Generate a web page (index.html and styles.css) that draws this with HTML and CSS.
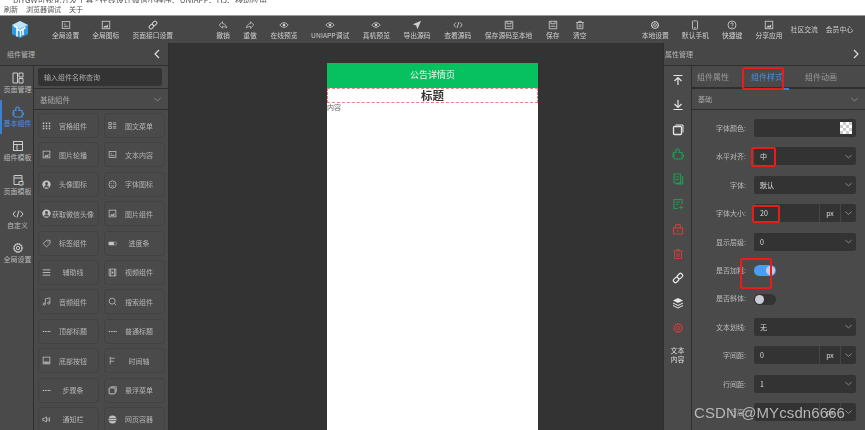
FILE: index.html
```html
<!DOCTYPE html>
<html lang="zh">
<head>
<meta charset="utf-8">
<title>组件样式</title>
<link rel="stylesheet" href="styles.css">
</head>
<body>
<svg class="defs" width="0" height="0">
<defs>
<symbol id="i-box" viewBox="0 0 12 12"><rect x="1.500" y="2" width="9" height="8" fill="none" stroke="currentColor"/><path d="M3.500 7.500h5M3.500 5h2" stroke="currentColor"/></symbol>
<symbol id="i-pic" viewBox="0 0 12 12"><rect x="1.500" y="1.500" width="9" height="9" fill="none" stroke="currentColor"/><path d="M3 8.500l2-2 1.500 1 2-2.500V9H3z" fill="currentColor"/></symbol>
<symbol id="i-link" viewBox="0 0 12 12"><g fill="none" stroke="currentColor" stroke-width="1.200" transform="rotate(-45 6 6)"><rect x="0.500" y="4" width="5.500" height="4" rx="1.500"/><rect x="6" y="4" width="5.500" height="4" rx="1.500"/></g></symbol>
<symbol id="i-undo" viewBox="0 0 12 12"><path d="M5.500 2L1.500 6l4 4V7.800c2 0 3.500.4 5 1.700C10 6.500 8 4.500 5.500 4.300z" fill="none" stroke="currentColor" stroke-width=".9"/></symbol>
<symbol id="i-redo" viewBox="0 0 12 12"><path d="M6.500 2l4 4-4 4V7.800c-2 0-3.500.4-5 1.700C2 6.500 4 4.500 6.500 4.300z" fill="none" stroke="currentColor" stroke-width=".9"/></symbol>
<symbol id="i-eye" viewBox="0 0 12 12"><path d="M1 6c2.800-3.600 7.200-3.600 10 0-2.800 3.600-7.200 3.600-10 0z" fill="none" stroke="currentColor"/><circle cx="6" cy="6" r="1.600" fill="currentColor"/></symbol>
<symbol id="i-send" viewBox="0 0 12 12"><path d="M11 1L1 5l4 1.500L6.500 11zM5 6.500L11 1" fill="currentColor"/></symbol>
<symbol id="i-code" viewBox="0 0 12 12"><path d="M3.500 3L1 6l2.500 3M8.500 3L11 6 8.500 9M7 2.500L5 9.500" fill="none" stroke="currentColor"/></symbol>
<symbol id="i-save" viewBox="0 0 12 12"><path d="M1.500 1.500h9v9h-9zM3.500 1.500v3h5v-3M3 7.500h6" fill="none" stroke="currentColor"/></symbol>
<symbol id="i-trash" viewBox="0 0 12 12"><path d="M1.500 3h9M4.500 3V1.500h3V3M2.500 3v7.500h7V3M5 5v4M7 5v4" fill="none" stroke="currentColor"/></symbol>
<symbol id="i-gear" viewBox="0 0 12 12"><circle cx="6" cy="6" r="4" fill="none" stroke="currentColor" stroke-width="1.500" stroke-dasharray="1.800 .3"/><circle cx="6" cy="6" r="1.700" fill="none" stroke="currentColor"/></symbol>
<symbol id="i-phone" viewBox="0 0 12 12"><rect x="3" y="1" width="6" height="10" rx="1" fill="none" stroke="currentColor"/><path d="M5 9.300h2" stroke="currentColor"/></symbol>
<symbol id="i-help" viewBox="0 0 12 12"><circle cx="6" cy="6" r="4.800" fill="none" stroke="currentColor"/><path d="M4.500 4.800C4.500 3 7.500 3 7.500 4.800 7.500 6 6 5.800 6 7.300M6 8.200v1" fill="none" stroke="currentColor"/></symbol>
<symbol id="i-layout" viewBox="0 0 12 12"><path d="M1 1h4.500v10H1zM7 1h4v4H7zM7 6.500h4V11H7z" fill="none" stroke="currentColor"/></symbol>
<symbol id="i-puzzle" viewBox="0 0 12 12"><path d="M1.500 4.500h2.500C3 2 4.500 1 5.500 1S8 2 7 4.500h3v2.300c2 -.5 2 2.700 0 2.200V11h-7L1 8.500c1.500.5 1.500-2.500 0-2z" fill="none" stroke="currentColor" stroke-width="1.200"/></symbol>
<symbol id="i-tmpl" viewBox="0 0 12 12"><rect x="1.500" y="1.500" width="9" height="9" fill="none" stroke="currentColor"/><path d="M1.500 4.500h9M5 4.500v6" stroke="currentColor"/></symbol>
<symbol id="i-page" viewBox="0 0 12 12"><path d="M2 1.500h8v6M2 1.500v9h5" fill="none" stroke="currentColor"/><path d="M2 4h8M7 7.500h4v3.500H7z" fill="none" stroke="currentColor"/></symbol>
<symbol id="i-grid" viewBox="0 0 12 12"><path d="M1 2h2v2H1zM5 2h2v2H5zM9 2h2v2H9zM1 5.500h2v2H1zM5 5.500h2v2H5zM9 5.500h2v2H9zM1 9h2v2H1zM5 9h2v2H5zM9 9h2v2H9z" fill="currentColor"/></symbol>
<symbol id="i-list" viewBox="0 0 12 12"><path d="M1 2h3.500v3H1zM1 7h3.500v3H1z" fill="none" stroke="currentColor"/><path d="M6.500 2.500h4.500M6.500 4.500h4.500M6.500 7.500h4.500M6.500 9.500h4.500" stroke="currentColor"/></symbol>
<symbol id="i-user" viewBox="0 0 12 12"><circle cx="6" cy="6" r="5.500" fill="currentColor"/><circle cx="6" cy="4.700" r="2" fill="#4a4a4a"/><path d="M2.500 10c.6-4 6.400-4 7 0z" fill="#4a4a4a"/></symbol>
<symbol id="i-smile" viewBox="0 0 12 12"><circle cx="6" cy="6" r="4.800" fill="none" stroke="currentColor"/><path d="M3.800 7c1 1.500 3.400 1.500 4.400 0M4.300 4.300v1M7.700 4.300v1" fill="none" stroke="currentColor"/></symbol>
<symbol id="i-tag" viewBox="0 0 12 12"><path d="M1.500 6L6.500 1.500 11 2l-.5 4.500L6 10.500z" fill="none" stroke="currentColor"/><circle cx="8" cy="4" r=".8" fill="currentColor"/></symbol>
<symbol id="i-bar" viewBox="0 0 12 12"><rect x="1" y="4" width="10" height="4" rx="1" fill="none" stroke="currentColor" stroke-width=".7"/><rect x="1" y="4" width="7" height="4" rx="1" fill="currentColor"/></symbol>
<symbol id="i-lines" viewBox="0 0 12 12"><path d="M1 2.500h10M1 6h10M1 9.500h10" stroke="currentColor" stroke-width="1.200"/></symbol>
<symbol id="i-video" viewBox="0 0 12 12"><path d="M1.500 1.500h9v9h-9z" fill="none" stroke="currentColor"/><path d="M3.500 1.500v9M8.500 1.500v9" stroke="currentColor"/><path d="M5 4l2.500 2L5 8z" fill="currentColor"/></symbol>
<symbol id="i-music" viewBox="0 0 12 12"><path d="M4.500 9V2.500l6-1.500v6.500" fill="none" stroke="currentColor"/><circle cx="3" cy="9.500" r="1.500" fill="none" stroke="currentColor"/><circle cx="9" cy="8" r="1.500" fill="none" stroke="currentColor"/></symbol>
<symbol id="i-search" viewBox="0 0 12 12"><circle cx="5.500" cy="5.500" r="4" fill="none" stroke="currentColor"/><path d="M8.500 8.500l2.500 2.500" stroke="currentColor"/></symbol>
<symbol id="i-foot" viewBox="0 0 12 12"><rect x="1.500" y="1.500" width="9" height="9" fill="none" stroke="currentColor"/><path d="M1.500 8h9" stroke="currentColor"/><path d="M3 8.500h6v1.500H3z" fill="currentColor"/></symbol>
<symbol id="i-time" viewBox="0 0 12 12"><path d="M3 1v10M3 3h6M3 7h5" fill="none" stroke="currentColor"/></symbol>
<symbol id="i-dots" viewBox="0 0 12 12"><path d="M1 6h2M4.200 6h2M7.400 6h2M10 6h1.500" stroke="currentColor" stroke-width="1.400"/></symbol>
<symbol id="i-copy" viewBox="0 0 12 12"><rect x="1.500" y="2.500" width="8" height="8" rx="1" fill="none" stroke="currentColor" stroke-width="1.300"/><path d="M3.500 1h7.500v7.500" fill="none" stroke="currentColor"/></symbol>
<symbol id="i-sound" viewBox="0 0 12 12"><path d="M1 4.500h2L6 2.500v7l-3-2H1z" fill="none" stroke="currentColor"/><path d="M8 4v4M10 3v6" stroke="currentColor"/></symbol>
<symbol id="i-globe" viewBox="0 0 12 12"><circle cx="6" cy="6" r="5.200" fill="currentColor"/><path d="M1 4.500h10M1 7.500h10" stroke="#4a4a4a"/></symbol>
<symbol id="i-top" viewBox="0 0 12 12"><path d="M1.500 1.500h9M6 11V3.500M2.500 7L6 3.500 9.500 7" fill="none" stroke="currentColor" stroke-width="1.200"/></symbol>
<symbol id="i-down" viewBox="0 0 12 12"><path d="M1.500 10.500h9M6 1v7.500M2.500 5L6 8.500 9.500 5" fill="none" stroke="currentColor" stroke-width="1.200"/></symbol>
<symbol id="i-doc" viewBox="0 0 12 12"><path d="M2 1h6.500v9H2zM4 10.800h6.500V3" fill="none" stroke="currentColor" stroke-width="1.200"/><path d="M3.500 4h3.500M3.500 6.500h3.500" stroke="currentColor"/></symbol>
<symbol id="i-docadd" viewBox="0 0 12 12"><path d="M6 10.500H2v-9h8V6" fill="none" stroke="currentColor" stroke-width="1.200"/><path d="M4 4h4M4 6.500h2.500M9 7.500v4M7 9.500h4" stroke="currentColor"/></symbol>
<symbol id="i-lock" viewBox="0 0 12 12"><rect x="1.500" y="5" width="9" height="6" fill="none" stroke="currentColor" stroke-width="1.200"/><path d="M3.500 5V3.200c0-2.500 5-2.500 5 0V5M6 7v2" fill="none" stroke="currentColor" stroke-width="1.200"/></symbol>
<symbol id="i-layers" viewBox="0 0 12 12"><path d="M6 1l5 2.500L6 6 1 3.500z" fill="currentColor"/><path d="M1 6l5 2.500L11 6M1 8.500L6 11l5-2.500" fill="none" stroke="currentColor"/></symbol>
<symbol id="i-chev" viewBox="0 0 10 10"><path d="M1.500 3.500L5 6.500l3.500-3" fill="none" stroke="currentColor"/></symbol>
</defs>
</svg>

<div class="titlebar"><span class="title-text">DIYGW可视化开发工具 - 在线设计微信小程序、UNIAPP、H5、移动应用</span></div>
<nav class="menu"><span>刷新</span><span>浏览器调试</span><span>关于</span></nav>

<header class="toolbar">
  <div class="tool-group">
    <svg class="logo" viewBox="0 0 16 17"><path d="M8 0l8 4v9l-8 4-8-4V4z" fill="#2c9be6"/><path d="M8 0l8 4-8 4-8-4z" fill="#bfe3fa"/><path d="M2 5l3 1.500v9M5 8l3 1.500M8.500 15.500V9.500l5-3M11 8v6" stroke="#fff" stroke-width="1.500" fill="none"/></svg>
    <a class="tool"><svg><use href="#i-box"/></svg>全局设置</a>
    <a class="tool"><svg><use href="#i-pic"/></svg>全局图标</a>
    <a class="tool"><svg><use href="#i-link"/></svg>页面接口设置</a>
  </div>
  <div class="tool-group tool-group-center">
    <a class="tool"><svg><use href="#i-undo"/></svg>撤销</a>
    <a class="tool"><svg><use href="#i-redo"/></svg>重做</a>
    <a class="tool"><svg><use href="#i-eye"/></svg>在线预览</a>
    <a class="tool"><svg><use href="#i-eye"/></svg>UNIAPP调试</a>
    <a class="tool"><svg><use href="#i-eye"/></svg>真机预览</a>
    <a class="tool"><svg><use href="#i-send"/></svg>导出源码</a>
    <a class="tool"><svg><use href="#i-code"/></svg>查看源码</a>
    <a class="tool"><svg><use href="#i-save"/></svg>保存源码至本地</a>
    <a class="tool"><svg><use href="#i-save"/></svg>保存</a>
    <a class="tool"><svg><use href="#i-trash"/></svg>清空</a>
  </div>
  <div class="tool-group">
    <a class="tool"><svg><use href="#i-gear"/></svg>本地设置</a>
    <a class="tool"><svg><use href="#i-phone"/></svg>默认手机</a>
    <a class="tool"><svg><use href="#i-help"/></svg>快捷键</a>
    <a class="tool"><svg><use href="#i-pic"/></svg>分享应用</a>
    <a class="tool plain">社区交流</a>
    <a class="tool plain">会员中心</a>
  </div>
</header>

<main class="workspace">
  <aside class="left">
    <div class="panel-head"><span>组件管理</span><svg class="caret" viewBox="0 0 8 10"><path d="M6 1L2 5l4 4" fill="none" stroke="currentColor" stroke-width="1.200"/></svg></div>
    <div class="left-body">
      <div class="side">
        <a class="side-item"><svg><use href="#i-layout"/></svg>页面管理</a>
        <a class="side-item on"><svg><use href="#i-puzzle"/></svg>基本组件</a>
        <a class="side-item"><svg><use href="#i-tmpl"/></svg>组件模板</a>
        <a class="side-item"><svg><use href="#i-page"/></svg>页面模板</a>
        <a class="side-item"><svg><use href="#i-code"/></svg>自定义</a>
        <a class="side-item"><svg><use href="#i-gear"/></svg>全局设置</a>
      </div>
      <div class="lib">
        <div class="search"><div class="search-box">输入组件名称查询</div></div>
        <div class="acc"><span>基础组件</span><svg class="chev"><use href="#i-chev"/></svg></div>
        <div class="cards">
          <a class="card"><svg><use href="#i-grid"/></svg><span>宫格组件</span></a>
          <a class="card"><svg><use href="#i-list"/></svg><span>图文菜单</span></a>
          <a class="card"><svg><use href="#i-pic"/></svg><span>图片轮播</span></a>
          <a class="card"><svg><use href="#i-box"/></svg><span>文本内容</span></a>
          <a class="card"><svg><use href="#i-user"/></svg><span>头像图标</span></a>
          <a class="card"><svg><use href="#i-smile"/></svg><span>字体图标</span></a>
          <a class="card"><svg><use href="#i-user"/></svg><span>获取微信头像</span></a>
          <a class="card"><svg><use href="#i-pic"/></svg><span>图片组件</span></a>
          <a class="card"><svg><use href="#i-tag"/></svg><span>标签组件</span></a>
          <a class="card"><svg><use href="#i-bar"/></svg><span>进度条</span></a>
          <a class="card"><svg><use href="#i-lines"/></svg><span>辅助线</span></a>
          <a class="card"><svg><use href="#i-video"/></svg><span>视频组件</span></a>
          <a class="card"><svg><use href="#i-music"/></svg><span>音频组件</span></a>
          <a class="card"><svg><use href="#i-search"/></svg><span>搜索组件</span></a>
          <a class="card"><svg><use href="#i-dots"/></svg><span>顶部标题</span></a>
          <a class="card"><svg><use href="#i-dots"/></svg><span>普通标题</span></a>
          <a class="card"><svg><use href="#i-foot"/></svg><span>底部按钮</span></a>
          <a class="card"><svg><use href="#i-time"/></svg><span>时间轴</span></a>
          <a class="card"><svg><use href="#i-dots"/></svg><span>步骤条</span></a>
          <a class="card"><svg><use href="#i-copy"/></svg><span>悬浮菜单</span></a>
          <a class="card"><svg><use href="#i-sound"/></svg><span>通知栏</span></a>
          <a class="card"><svg><use href="#i-globe"/></svg><span>网页容器</span></a>
        </div>
      </div>
    </div>
  </aside>

  <section class="canvas">
    <div class="phone">
      <div class="phone-bar">公告详情页</div>
      <div class="phone-title">标题</div>
      <div class="phone-text">内容</div>
    </div>
  </section>

  <aside class="right">
    <div class="panel-head"><span>属性管理</span><svg class="caret" viewBox="0 0 8 10"><path d="M2 1l4 4-4 4" fill="none" stroke="currentColor" stroke-width="1.200"/></svg></div>
    <div class="right-body">
      <div class="actions">
        <svg class="light"><use href="#i-top"/></svg>
        <svg class="light"><use href="#i-down"/></svg>
        <svg class="light"><use href="#i-copy"/></svg>
        <svg class="green"><use href="#i-puzzle"/></svg>
        <svg class="green"><use href="#i-doc"/></svg>
        <svg class="green"><use href="#i-docadd"/></svg>
        <svg class="red"><use href="#i-lock"/></svg>
        <svg class="red"><use href="#i-trash"/></svg>
        <svg class="light"><use href="#i-link"/></svg>
        <svg class="light"><use href="#i-layers"/></svg>
        <svg class="red"><use href="#i-gear"/></svg>
        <span class="action-text">文本<br>内容</span>
      </div>
      <div class="props">
        <div class="tabs"><span>组件属性</span><span class="active">组件样式</span><span>组件动画</span><i class="mark mark-tab"></i></div>
        <div class="acc"><span>基础</span><svg class="chev"><use href="#i-chev"/></svg></div>
        <div class="form">
          <div class="row"><label>字体颜色:</label><div class="field"><span class="swatch"></span></div></div>
          <div class="row"><label>水平对齐:</label><div class="field"><span>中</span><svg class="chev"><use href="#i-chev"/></svg></div><i class="mark mark-align"></i></div>
          <div class="row"><label>字体:</label><div class="field"><span>默认</span><svg class="chev"><use href="#i-chev"/></svg></div></div>
          <div class="row"><label>字体大小:</label><div class="field unit"><span class="val">20</span><span class="px">px</span><svg class="chev"><use href="#i-chev"/></svg></div><i class="mark mark-size"></i></div>
          <div class="row"><label>显示层级:</label><div class="field"><span>0</span><svg class="chev"><use href="#i-chev"/></svg></div></div>
          <div class="row"><label>是否加粗:</label><div class="toggle on"></div><i class="mark mark-bold"></i></div>
          <div class="row"><label>是否斜体:</label><div class="toggle"></div></div>
          <div class="row"><label>文本划线:</label><div class="field"><span>无</span><svg class="chev"><use href="#i-chev"/></svg></div></div>
          <div class="row"><label>字间距:</label><div class="field unit"><span class="val">0</span><span class="px">px</span><svg class="chev"><use href="#i-chev"/></svg></div></div>
          <div class="row"><label>行间距:</label><div class="field"><span>1</span><svg class="chev"><use href="#i-chev"/></svg></div></div>
          <div class="row"><label>行高:</label><div class="field unit"><span class="val"></span><span class="px">px</span><svg class="chev"><use href="#i-chev"/></svg></div></div>
        </div>
      </div>
    </div>
  </aside>
</main>
<div class="watermark">CSDN @MYcsdn6666</div>
</body>
</html>
```
FILE: styles.css
```css
* { box-sizing: border-box; }
html, body { margin: 0; height: 430px; overflow: hidden; }
body {
  width: 865px;
  background: #fff;
  font-family: "Noto Sans CJK SC", "Noto Sans", sans-serif;
  font-size: 7px;
  color: #c4c4c4;
  display: flex;
  flex-direction: column;
  position: relative;
}
.defs { position: absolute; }
a { color: inherit; text-decoration: none; }

.titlebar { height: 3px; overflow: hidden; padding-left: 13px; color: #555; font-size: 8px; line-height: 3px; flex: none; filter: blur(.4px); }
.title-text { display: block; margin-top: -2px; white-space: nowrap; }
.menu { height: 12px; display: flex; gap: 8px; padding-left: 4px; align-items: center; color: #555; flex: none; filter: blur(.35px); }
.toolbar {
  height: 28px;
  flex: none;
  border-top: 1px solid #999;
  background: #474747;
  display: flex;
  justify-content: space-between;
  align-items: center;
  padding: 0 12px;
  filter: blur(.35px);
}
.tool-group { display: flex; align-items: center; gap: 13px; }
.tool-group-center { gap: 13.500px; margin-right: 12px; }
.tool { display: flex; flex-direction: column; align-items: center; line-height: 9px; white-space: nowrap; color: #cfcfcf; font-size: 6.800px; }
.tool svg { width: 10px; height: 10px; margin-bottom: 1px; }
.tool.plain { margin-left: -5px; }
.logo { width: 16px; height: 17px; margin-right: 11px; }

.workspace { flex: 1; display: flex; background: #333; min-height: 0; filter: blur(.35px); }
.left { width: 169px; flex: none; display: flex; flex-direction: column; background: #4a4a4a; border-right: 1px solid #2e2e2e; }
.right { width: 202px; flex: none; display: flex; flex-direction: column; background: #4a4a4a; border-left: 1px solid #2e2e2e; }
.canvas { flex: 1; padding: 20px 0 0 158px; min-width: 0; }

.panel-head {
  height: 23px;
  flex: none;
  display: flex;
  align-items: center;
  justify-content: space-between;
  padding: 0 7px 0 7px;
  background: #474747;
  border-bottom: 1px solid #2f2f2f;
  color: #b5b5b5;
}
.caret { width: 8px; height: 10px; color: #ddd; }
.right .panel-head { padding-left: 1px; padding-right: 5px; }

.left-body { flex: 1; display: flex; min-height: 0; }
.side { width: 34px; flex: none; border-right: 1px solid #2f2f2f; }
.side-item {
  height: 34px;
  display: flex;
  flex-direction: column;
  align-items: center;
  justify-content: center;
  line-height: 9px;
  color: #bbb;
  border-left: 2px solid transparent;
}
.side-item svg { width: 12px; height: 12px; margin-bottom: 1px; color: #ccc; }
.side-item.on { border-left-color: #3d7fd0; color: #4a8fe0; }
.side-item.on svg { color: #4a8fe0; }

.lib { flex: 1; min-width: 0; }
.search { height: 23px; padding: 2px 6px 0 4px; border-bottom: 1px solid #2f2f2f; }
.search-box { height: 18px; background: #333; border-radius: 2px; padding-left: 6px; line-height: 18px; color: #aaa; }
.acc {
  height: 21px;
  display: flex;
  align-items: center;
  justify-content: space-between;
  padding: 0 6px 0 6px;
  border-bottom: 1px solid #2f2f2f;
  color: #aaa;
  font-size: 7.500px;
}
.chev { width: 9px; height: 9px; color: #8d8d8d; flex: none; }
.cards { display: grid; grid-template-columns: 61px 61px; gap: 4.400px 5px; padding: 3px 0 0 4px; }
.card {
  height: 25px;
  display: flex;
  align-items: center;
  border: 1px solid #424242;
  border-radius: 4px;
  padding: 0 3px;
  color: #b5b5b5;
}
.card svg { width: 9px; height: 9px; flex: none; color: #c4c4c4; }
.card span { flex: 1; text-align: center; white-space: nowrap; }

.right-body { flex: 1; display: flex; min-height: 0; }
.actions {
  width: 28px;
  flex: none;
  border-right: 1px solid #2f2f2f;
  display: flex;
  flex-direction: column;
  align-items: center;
  padding-top: 8px;
  gap: 12.800px;
}
.actions svg { width: 12px; height: 12px; flex: none; }
.light { color: #e6e6e6; }
.green { color: #1f9a55; }
.red { color: #c8403a; }
.action-text { text-align: center; line-height: 9px; color: #ddd; margin-top: -1px; }

.props { flex: 1; min-width: 0; }
.tabs {
  height: 23px;
  display: flex;
  align-items: center;
  gap: 22px;
  padding-left: 5px;
  font-size: 8px;
  color: #9a9a9a;
  position: relative;
  border-bottom: 2px solid #2f2f2f;
}
.tabs .active { color: #4a90e2; position: relative; }
.tabs .active::after { content: ""; position: absolute; left: -5px; right: -6px; top: 17px; height: 2px; background: #3d7fd0; }
.right .acc { padding-left: 6px; font-size: 7px; }
.form { padding: 9px 9px 0 0; display: flex; flex-direction: column; gap: 10.400px; }
.row { display: flex; align-items: center; height: 18px; position: relative; }
.row label { width: 54px; flex: none; text-align: right; margin-right: 8px; color: #bcbcbc; white-space: nowrap; }
.field {
  flex: 1;
  height: 18px;
  background: #333;
  border-radius: 2px;
  display: flex;
  align-items: center;
  justify-content: space-between;
  padding: 0 3px 0 6px;
  color: #ddd;
}
.field.unit { justify-content: flex-start; padding-right: 0; }
.val { flex: 1; }
.px { width: 21px; height: 18px; line-height: 18px; text-align: center; border-left: 1px solid #454545; }
.field.unit .chev { width: 16px; padding: 0 3px; border-left: 1px solid #454545; height: 18px; }
.swatch {
  width: 12px;
  height: 12px;
  margin-left: auto;
  margin-right: 1px;
  background: conic-gradient(#ccc 25%, #fff 0 50%, #ccc 0 75%, #fff 0) 0 0 / 6px 6px;
}
.toggle { width: 22px; height: 11px; border-radius: 6px; background: #333; position: relative; margin-top: 2px; }
.toggle::after { content: ""; position: absolute; left: 1px; top: 1px; width: 9px; height: 9px; border-radius: 50%; background: #c9ccd6; }
.toggle.on { background: #4a9cf5; }
.toggle.on::after { left: 12px; }

.mark { position: absolute; border: 2px solid #e81c1c; border-radius: 2px; display: block; pointer-events: none; }
.mark-tab { left: 50px; top: 1px; width: 42px; height: 23px; }
.mark-align { left: 59px; top: 0; width: 25px; height: 20px; }
.mark-size { left: 60px; top: 1px; width: 28px; height: 18px; }
.mark-bold { left: 48px; top: -3px; width: 32px; height: 31px; }

.phone { width: 211px; height: 367px; background: #fff; color: #333; }
.phone-bar { height: 25px; background: #07c160; color: #f2f2f2; text-align: center; line-height: 24px; font-size: 9px; }
.phone-title { height: 15px; text-align: center; line-height: 13px; font-size: 11.500px; font-weight: 700; border: 1px dashed #f08080; color: #333; }
.phone-text { font-size: 7px; line-height: 9px; color: #666; }

.watermark {
  position: absolute;
  left: 694px;
  top: 404px;
  font-family: "Liberation Sans", sans-serif;
  font-size: 15px;
  letter-spacing: .1px;
  color: #d2d2d2;
  opacity: .82;
  text-shadow: 0 0 1px #333;
  white-space: nowrap;
}
```
